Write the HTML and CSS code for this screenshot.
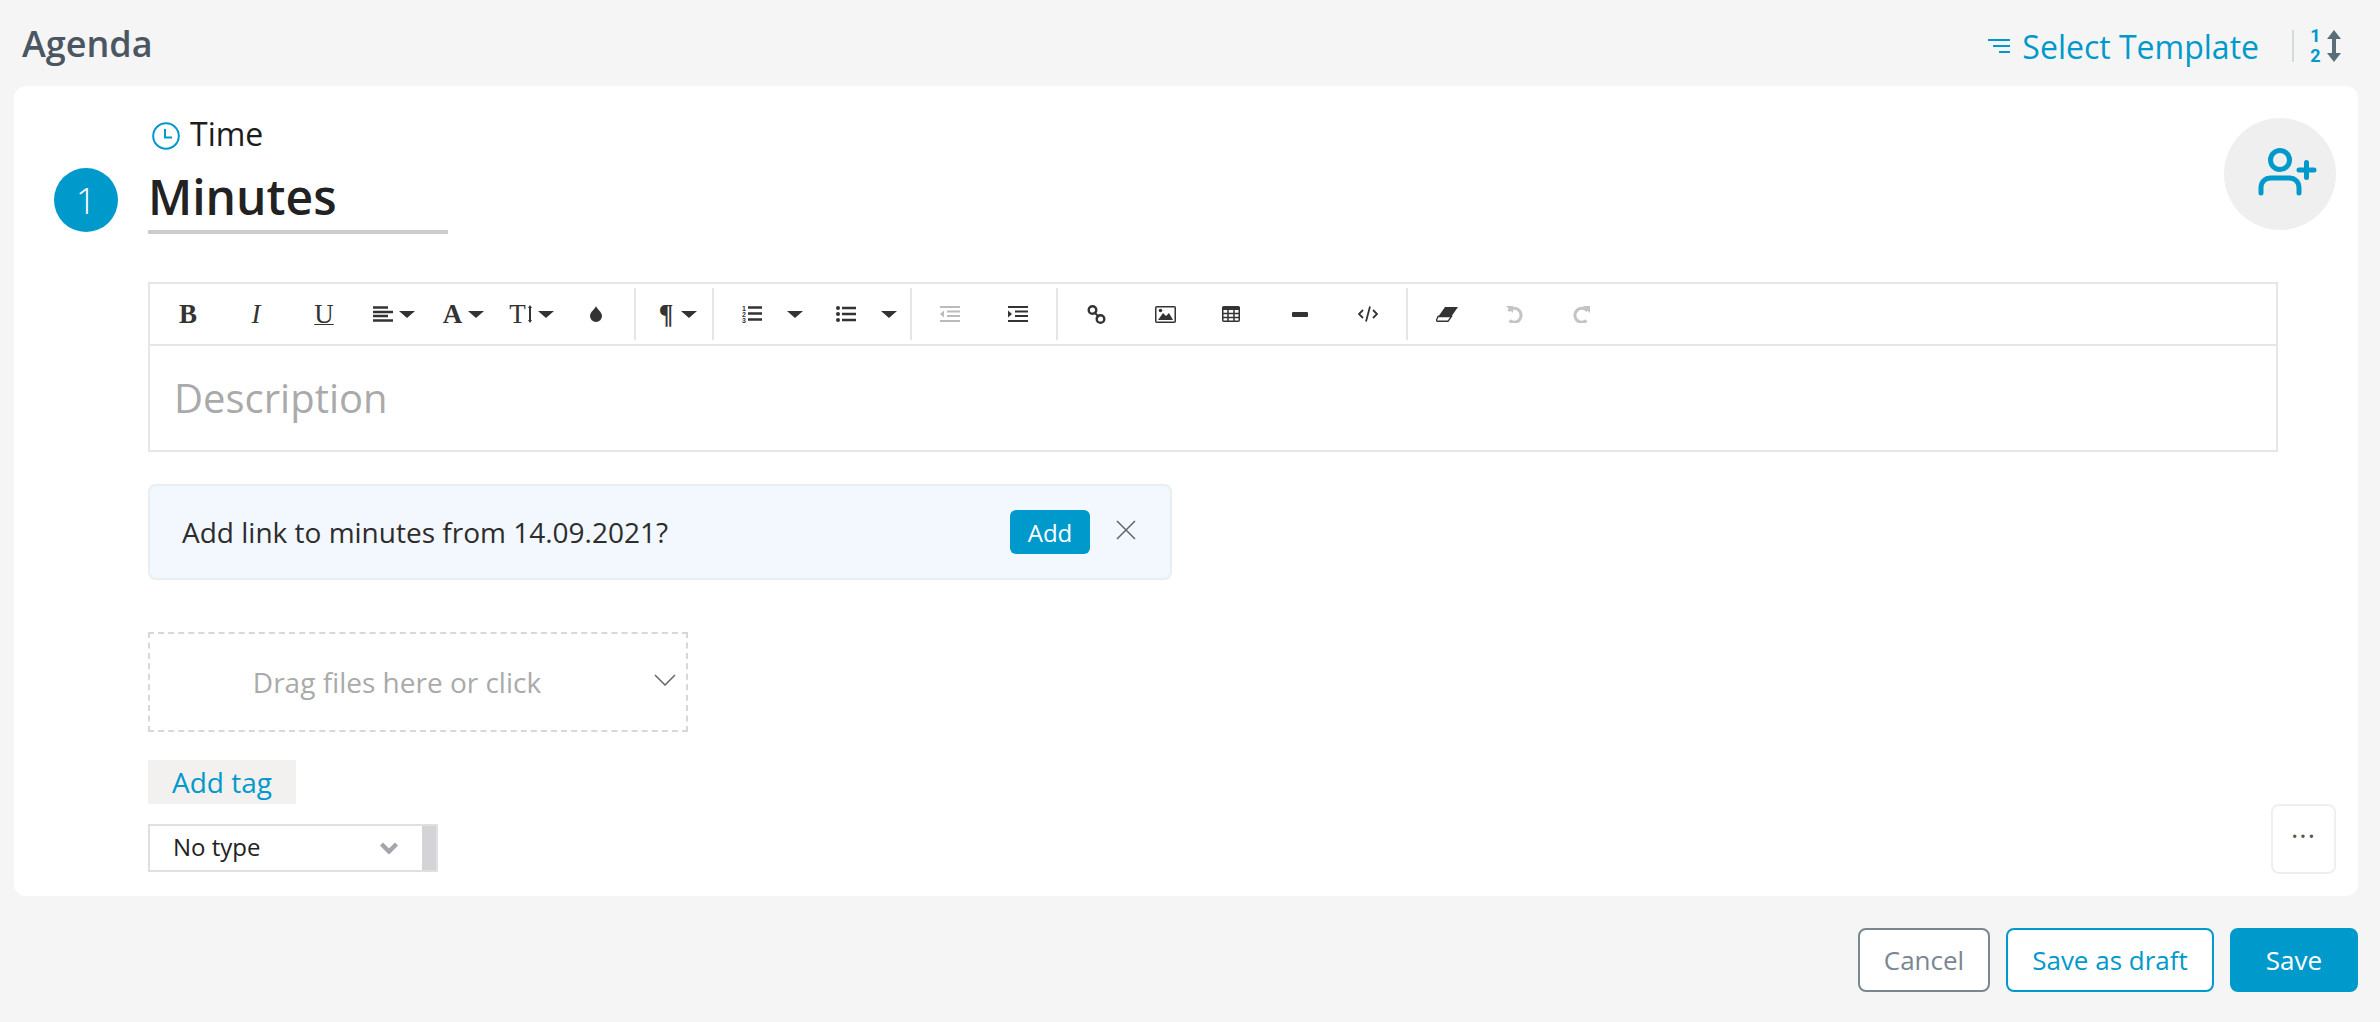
FILE: index.html
```html
<!DOCTYPE html>
<html lang="en">
<head>
<meta charset="utf-8">
<title>Agenda</title>
<link rel="stylesheet" href="styles.css">
</head>
<body>
<header class="top">
  <h1 class="title">Agenda</h1>
  <div class="top-actions">
    <a class="template">
      <svg class="template-icon" width="22" height="14" viewBox="0 0 22 14"><path d="M0 1h22M5 7h17M11 13h11" stroke="#0099cc" stroke-width="2" fill="none"/></svg>
      Select Template
    </a>
    <span class="top-sep"></span>
    <span class="sort">
      <span class="sort-nums"><span>1</span><span>2</span></span>
      <svg width="14" height="32" viewBox="0 0 14 32"><path d="M7 0l7 9H9v14h5l-7 9-7-9h5V9H0z" fill="#5a6e7a"/></svg>
    </span>
  </div>
</header>

<main class="card">
  <button class="assign">
    <svg width="60" height="50" viewBox="0 0 60 50" fill="none" stroke="#0099cc" stroke-width="5" stroke-linecap="round"><circle cx="22" cy="12" r="9.500"/><path d="M3 45v-5c0-6 4-10 10-10h18c6 0 10 4 10 10v5"/><path d="M41 22h15M48.500 14.500v15"/></svg>
  </button>

  <div class="item">
    <div class="num-col"><span class="num">1</span></div>
    <div class="body">
      <div class="time">
        <svg class="time-icon" width="28" height="28" viewBox="0 0 28 28" fill="none" stroke="#0099cc"><circle cx="14" cy="14" r="12.800" stroke-width="2"/><path d="M13 7v8.500h7" stroke-width="2"/></svg>
        <span>Time</span>
      </div>
      <div class="name">Minutes</div>

      <div class="editor">
        <div class="toolbar">
          <span class="tb w68 serif bold">B</span>
          <span class="tb w68 serif italic">I</span>
          <span class="tb w68 serif under">U</span>
          <span class="tb w72 gap6">
            <svg width="20" height="16" viewBox="0 0 20 16"><path d="M0 1.500h15M0 6h20M0 10h15M0 14.500h20" stroke="#333" stroke-width="2.400"/></svg><i class="caret"></i>
          </span>
          <span class="tb w67 gap6 serif bold">A<i class="caret"></i></span>
          <span class="tb w69 gap2 serif">T<svg class="t-arrows" width="4" height="18" viewBox="0 0 4 18"><path d="M2 0l2 3H3v12h1l-2 3-2-3h1V3H0z" fill="#333"/></svg><i class="caret"></i></span>
          <span class="tb w68 drop-cell">
            <svg width="12" height="16" viewBox="0 0 12 16"><path d="M6 0c1 3 6 6 6 10a6 6 0 0 1-12 0C0 6 5 3 6 0z" fill="#333"/></svg>
          </span>
          <span class="sep"></span>
          <span class="tb w76 para serif bold">¶<i class="caret"></i></span>
          <span class="sep"></span>
          <span class="tb w98 ol">
            <svg width="20" height="18" viewBox="0 0 20 18"><text x="0" y="5.500" class="mini">1</text><text x="0" y="11.500" class="mini">2</text><text x="0" y="17.500" class="mini">3</text><path d="M6 2.500h14M6 8.500h14M6 14.500h14" stroke="#333" stroke-width="2.400"/></svg><i class="caret"></i>
          </span>
          <span class="tb w98 ul">
            <svg width="20" height="16" viewBox="0 0 20 16"><circle cx="2" cy="2" r="2" fill="#333"/><circle cx="2" cy="8" r="2" fill="#333"/><circle cx="2" cy="14" r="2" fill="#333"/><path d="M6 2h14M6 8h14M6 14h14" stroke="#333" stroke-width="2.400"/></svg><i class="caret"></i>
          </span>
          <span class="sep"></span>
          <span class="tb w76">
            <svg width="20" height="16" viewBox="0 0 20 16"><path d="M0 1h20M7 5.500h13M7 10h13M0 15h20" stroke="#bbb" stroke-width="2.200"/><path d="M4 4.500v7L0 8z" fill="#bbb"/></svg>
          </span>
          <span class="tb w68 indent">
            <svg width="20" height="16" viewBox="0 0 20 16"><path d="M0 1h20M7 5.500h13M7 10h13M0 15h20" stroke="#333" stroke-width="2.200"/><path d="M0 4.500v7L4 8z" fill="#333"/></svg>
          </span>
          <span class="sep"></span>
          <span class="tb w76">
            <svg width="19" height="19" viewBox="0 0 19 19" fill="none" stroke="#333" stroke-width="2.400"><circle cx="5.500" cy="5" r="3.800"/><circle cx="13.500" cy="14" r="3.800"/><path d="M7 7l5 5" stroke-width="2"/></svg>
          </span>
          <span class="tb w62">
            <svg width="21" height="17" viewBox="0 0 21 17"><rect x=".75" y=".75" width="19.500" height="15.500" rx="1" fill="none" stroke="#333" stroke-width="1.500"/><path d="M3 14l5-7 3 3 3-3 4 7z" fill="#333"/><circle cx="5.500" cy="4.500" r="1.800" fill="#333"/></svg>
          </span>
          <span class="tb w70">
            <svg width="18" height="16" viewBox="0 0 18 16" fill="none" stroke="#333"><rect x=".75" y=".75" width="16.500" height="14.500" rx="1" stroke-width="1.500"/><path d="M0 2.500h18" stroke-width="3"/><path d="M0 7.500h18M0 11.500h18M6 2v13M12 2v13" stroke-width="1.500"/></svg>
          </span>
          <span class="tb w68">
            <svg width="16" height="5" viewBox="0 0 16 5"><rect width="16" height="5" rx="1" fill="#333"/></svg>
          </span>
          <span class="tb w68">
            <svg width="20" height="16" viewBox="0 0 20 16" fill="none" stroke="#333" stroke-width="1.800"><path d="M5 4L1 8l4 4M15 4l4 4-4 4M12 .5L8 15.500"/></svg>
          </span>
          <span class="sep sep-mid"></span>
          <span class="tb w78">
            <svg width="22" height="15" viewBox="0 0 22 15"><path d="M9 0h13l-7 10H2z" fill="#333"/><path d="M2 9.500h13.500L12 14.250H1.500a1 1 0 0 1-.8-1.600z" fill="#fff" stroke="#333" stroke-width="1.300"/></svg>
          </span>
          <span class="tb w56">
            <svg width="18" height="18" viewBox="0 0 18 18" fill="none" stroke="#c4c4c4" stroke-width="3"><path d="M3.500 6a7 7 0 1 1 1 9.500"/><path d="M1 1h7v7z" fill="#c4c4c4" stroke="none"/></svg>
          </span>
          <span class="tb w80">
            <svg width="18" height="18" viewBox="0 0 18 18" fill="none" stroke="#c4c4c4" stroke-width="3"><path d="M14.500 6a7 7 0 1 0-1 9.500"/><path d="M17 1h-7l7 7z" fill="#c4c4c4" stroke="none"/></svg>
          </span>
        </div>
        <div class="description">Description</div>
      </div>

      <div class="notice">
        <span class="notice-text">Add link to minutes from 14.09.2021?</span>
        <button class="notice-add">Add</button>
        <svg class="notice-close" width="20" height="20" viewBox="0 0 20 20"><path d="M1 1l18 18M19 1L1 19" stroke="#5a6570" stroke-width="1.500"/></svg>
      </div>

      <div class="dropzone">
        <span class="dropzone-text">Drag files here or click</span>
        <svg class="dropzone-chev" width="22" height="12" viewBox="0 0 22 12"><path d="M1 1l10 10L21 1" fill="none" stroke="#666" stroke-width="1.500"/></svg>
      </div>

      <button class="add-tag">Add tag</button>

      <div class="select">
        <span class="select-value">No type</span>
        <svg class="select-chev" width="20" height="12" viewBox="0 0 20 12"><path d="M2.500 2l7.500 7.500L17.500 2" fill="none" stroke="#a5a5ad" stroke-width="4.500"/></svg>
        <span class="select-bar"></span>
      </div>
    </div>
  </div>

  <button class="more">···</button>
</main>

<footer class="actions">
  <button class="btn btn-cancel">Cancel</button>
  <button class="btn btn-draft">Save as draft</button>
  <button class="btn btn-save">Save</button>
</footer>
</body>
</html>
```

FILE: styles.css
```css
* { box-sizing: border-box; }
html, body { margin: 0; height: 100%; }
body {
  background: #f5f5f5;
  font-family: "Open Sans", sans-serif;
  color: #222;
  overflow: hidden;
}
button { font-family: inherit; cursor: pointer; }

.top {
  height: 86px;
  display: flex;
  align-items: center;
  justify-content: space-between;
  padding: 6px 39px 0 22px;
}
.title {
  margin: 0 0 6px;
  font-size: 36px;
  font-weight: 600;
  color: #4a5763;
}
.top-actions { display: flex; align-items: center; }
.template {
  display: flex;
  align-items: center;
  font-size: 32px;
  color: #0099cc;
}
.template-icon { margin-right: 12px; }
.top-sep { width: 2px; height: 32px; background: #d5dade; margin: 0 15px 0 33px; }
.sort { display: flex; align-items: center; gap: 5px; }
.sort-nums {
  display: flex;
  flex-direction: column;
  font-family: "Roboto", sans-serif;
  font-weight: 700;
  font-size: 18px;
  line-height: 20px;
  color: #0099cc;
  text-align: center;
  width: 13px;
}

.card {
  position: relative;
  margin: 0 22px 0 14px;
  height: 810px;
  background: #fff;
  border-radius: 12px;
  padding-top: 28px;
}
.assign {
  position: absolute;
  top: 32px;
  right: 22px;
  width: 112px;
  height: 112px;
  border: 0;
  border-radius: 50%;
  background: #efefef;
  display: flex;
  align-items: center;
  justify-content: center;
  padding: 0 0 2px 16px;
}
.item { display: flex; }
.num-col { width: 134px; padding: 54px 0 0 40px; flex: none; }
.num {
  width: 64px;
  height: 64px;
  border-radius: 50%;
  background: #0099cc;
  color: #fff;
  font-size: 36px;
  font-weight: 300;
  display: flex;
  align-items: center;
  justify-content: center;
}
.body { width: 2130px; }
.time {
  display: flex;
  align-items: center;
  gap: 10px;
  height: 38px;
  padding-left: 4px;
  font-size: 32px;
  color: #1c1c1c;
}
.time-icon { margin-top: 6px; }
.name {
  margin-top: 12px;
  width: 300px;
  height: 70px;
  border-bottom: 4px solid #ccc;
  font-size: 48px;
  font-weight: 600;
  line-height: 66px;
  color: #222;
}
.editor {
  margin-top: 48px;
  border: 2px solid #e6e6e6;
  height: 170px;
}
.toolbar {
  display: flex;
  align-items: center;
  height: 62px;
  border-bottom: 2px solid #e6e6e6;
  padding-left: 4px;
  color: #333;
}
.tb { display: flex; align-items: center; justify-content: center; height: 40px; flex: none; }
.w56 { width: 56px; }
.w62 { width: 62px; }
.w67 { width: 67px; }
.w68 { width: 68px; }
.w69 { width: 69px; }
.w70 { width: 70px; }
.w72 { width: 72px; }
.w76 { width: 76px; }
.w78 { width: 78px; }
.w80 { width: 80px; }
.w98 { width: 98px; }
.ol, .ul { justify-content: flex-start; gap: 25px; }
.ol { padding-left: 28px; }
.ul { padding-left: 24px; }
.indent { justify-content: flex-start; padding-left: 20px; }
.drop-cell { padding-right: 8px; }
.para { gap: 8px; padding-left: 8px; }
.gap2 { gap: 2px; }
.gap6 { gap: 6px; }
.t-arrows { margin-right: 4px; }
.serif { font-family: "Liberation Serif", serif; font-size: 27px; }
.bold { font-weight: 700; }
.italic { font-style: italic; }
.under { text-decoration: underline; text-decoration-thickness: 1px; text-underline-offset: 1px; }
.caret {
  width: 0;
  height: 0;
  border-left: 8px solid transparent;
  border-right: 8px solid transparent;
  border-top: 7px solid #333;
}
.sep { width: 2px; height: 52px; background: #e6e6e6; flex: none; }
.sep-mid { margin-left: 4px; }
.mini { font-family: "Liberation Sans", sans-serif; font-size: 7px; font-weight: 700; fill: #333; }
.description {
  padding: 0 24px;
  font-size: 40px;
  line-height: 104px;
  color: #aaa;
}
.notice {
  margin-top: 32px;
  width: 1024px;
  height: 96px;
  display: flex;
  align-items: center;
  background: #f3f8fe;
  border: 2px solid #e9eef1;
  border-radius: 8px;
  padding: 0 34px 0 32px;
}
.notice-text { flex: 1; font-size: 28px; color: #2d2d2d; }
.notice-add {
  width: 80px;
  height: 44px;
  margin-right: 26px;
  border: 0;
  border-radius: 6px;
  background: #0099cc;
  color: #fff;
  font-size: 24px;
}
.notice-close { margin-bottom: 4px; }
.dropzone {
  position: relative;
  margin-top: 52px;
  width: 540px;
  height: 100px;
  border: 2px dashed #d8d8d8;
  display: flex;
  align-items: center;
  justify-content: center;
  padding-right: 42px;
  font-size: 28px;
  color: #aaa;
}
.dropzone-chev { position: absolute; right: 10px; top: 40px; }
.add-tag {
  display: block;
  margin-top: 28px;
  width: 148px;
  height: 44px;
  border: 0;
  background: #f2f1f0;
  color: #0099cc;
  font-size: 28px;
  padding: 0;
  line-height: 40px;
}
.select {
  margin-top: 20px;
  width: 290px;
  height: 48px;
  border: 2px solid #e0e0e0;
  display: flex;
  align-items: center;
  padding-left: 23px;
  font-size: 24px;
}
.select-value { flex: 1; line-height: 30px; padding-bottom: 2px; }
.select-chev { margin-right: 23px; }
.select-bar { width: 14px; align-self: stretch; background: #d4d4d8; }
.more {
  position: absolute;
  right: 22px;
  top: 718px;
  width: 65px;
  height: 70px;
  padding: 0 0 8px;
  border: 2px solid #efefef;
  border-radius: 8px;
  background: #fff;
  color: #555;
  font-size: 28px;
  letter-spacing: 1px;
}
.actions {
  display: flex;
  justify-content: flex-end;
  gap: 16px;
  padding: 32px 22px 0 0;
}
.btn {
  height: 64px;
  border-radius: 8px;
  font-size: 26px;
  padding: 0;
  border: 2px solid;
}
.btn-cancel { width: 132px; background: #fff; border-color: #7a8793; color: #7a8793; }
.btn-draft { width: 208px; background: #fff; border-color: #0099cc; color: #0099cc; }
.btn-save { width: 128px; background: #0099cc; border-color: #0099cc; color: #fff; }
```
